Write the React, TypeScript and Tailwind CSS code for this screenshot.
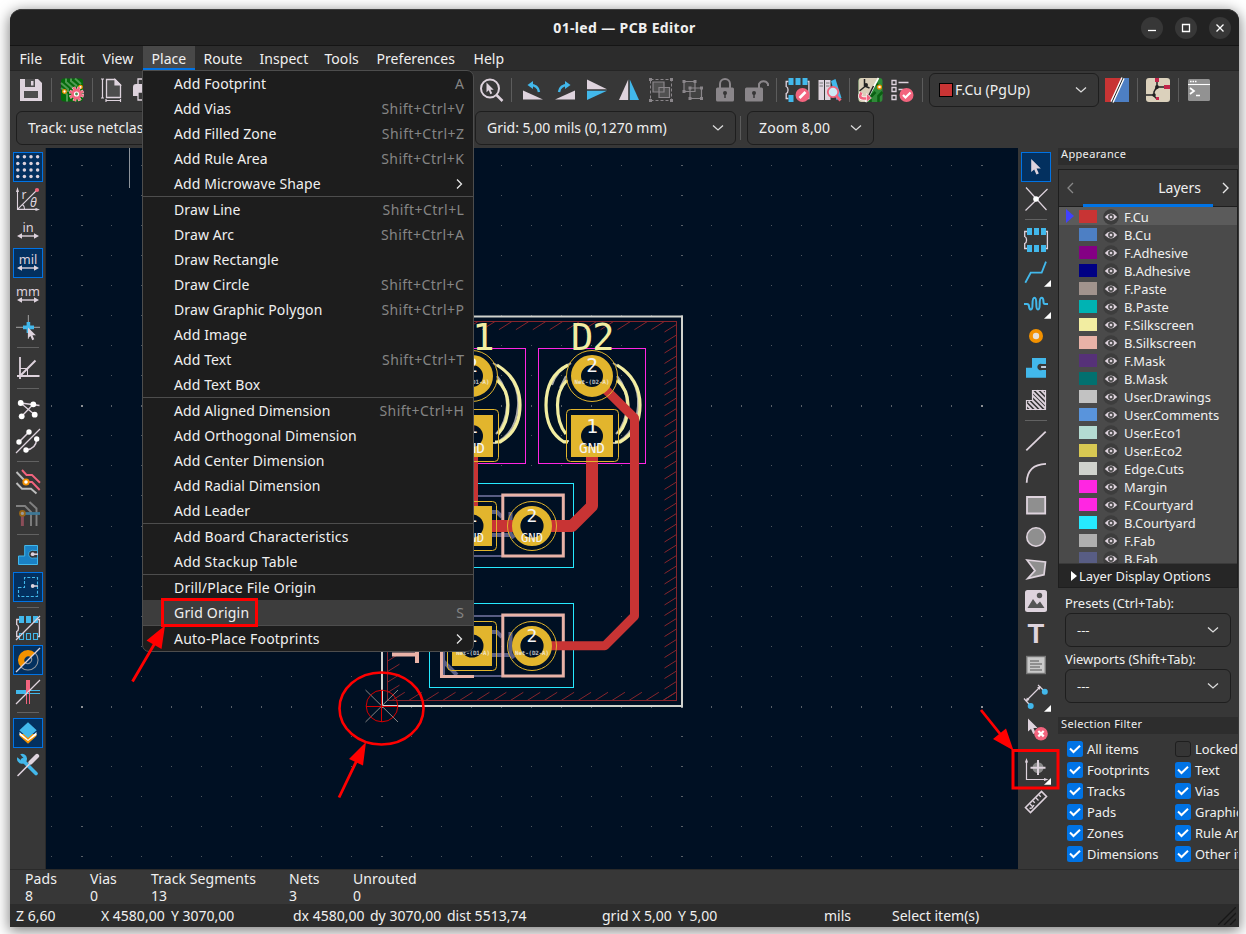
import React from "react";

type IconProps = { children: React.ReactNode };

const W = "#ded3dd";
const B = "#42b8eb";
const P = "#f2647e";
const O = "#f29100";

const Glyph = ({ children }: IconProps) => (
  <svg width="24" height="24" viewBox="0 0 24 24" fill="none" className="block shrink-0 overflow-visible">
    {children}
  </svg>
);

const Corner = () => <path d="M27 20V26.7H20Z" fill="#fff" />;
const Pointer = ({ x = 0, y = 0 }: { x?: number; y?: number }) => (
  <path
    transform={`translate(${x} ${y})`}
    d="M0 0V13L3 10.4L5.2 15.5L7.6 14.4L5.4 9.6H9.6Z"
    fill={W}
  />
);
const UnitArrow = () => (
  <>
    <path d="M4 17H20" stroke={W} strokeWidth="1.4" />
    <path d="M1 17L6 14.2V19.8ZM23 17L18 14.2V19.8Z" fill={W} />
  </>
);
const Unit = ({ t }: { t: string }) => (
  <Glyph>
    <text x="12" y="12.9" textAnchor="middle" fontSize="12.8" fill={W} fontFamily="Noto Sans, sans-serif">{t}</text>
    <UnitArrow />
  </Glyph>
);
const ChipOutline = () => (
  <path d="M3 3.5H.7V8.5C3.2 9.5 3.2 14.5.7 15.5V20.5H3M22 3.5H23.4V20.5H22" stroke={W} strokeWidth="1.3" />
);

const leftTools: (null | { on?: boolean; icon: React.ReactNode })[] = [
  {
    on: true,
    icon: (
      <Glyph>
        {[1.8, 8.4, 15, 21.6].map((y) => [1.8, 8.4, 15, 21.6].map((x) => <circle key={`${x}${y}`} cx={x} cy={y} r="1.75" fill={W} />))}
      </Glyph>
    ),
  },
  {
    icon: (
      <Glyph>
        <path d="M1.5 3V22.4H21M1.5 22.4L21 3M6.5 17.5Q9 19.5 8.5 22" stroke={W} strokeWidth="1.1" />
        <path d="M1.5 0L0 5H3ZM24 22.4L19.500 21V24Z" fill={W} />
        <circle cx="21" cy="3" r="2.1" fill={P} />
        <text x="5.500" y="11.500" fontSize="12" fill={W} fontFamily="Noto Sans, sans-serif">r</text>
        <text x="14" y="20" fontSize="12.500" fontStyle="italic" fill={W} fontFamily="Noto Sans, sans-serif">θ</text>
      </Glyph>
    ),
  },
  { icon: <Unit t="in" /> },
  { on: true, icon: <Unit t="mil" /> },
  { icon: <Unit t="mm" /> },
  {
    icon: (
      <Glyph>
        <path d="M12.400 0V24M0 12.400H24" stroke="#8f8f8f" strokeWidth="1.200" />
        <path d="M12.400 7V18M7 12.400H18" stroke={B} strokeWidth="3.600" />
        <g transform="translate(12 12.500) scale(.82)"><Pointer /></g>
      </Glyph>
    ),
  },
  null,
  {
    icon: (
      <Glyph>
        <path d="M4 1V23M1 20H23.500" stroke={W} strokeWidth="1.800" />
        <path d="M4 20L19.500 4.500" stroke={W} strokeWidth="2" />
        <path d="M4 12.500H11.500V20" stroke={W} strokeWidth="1" />
      </Glyph>
    ),
  },
  null,
  {
    icon: (
      <Glyph>
        <path d="M4.700 6L23.500 8.500M4.700 6L18.700 17.700M17.300 7.300L5.700 19.300" stroke={W} strokeWidth="1.300" />
        {[[4.7, 6], [17.3, 7.3], [18.7, 17.7], [5.7, 19.3]].map(([x, y]) => <circle key={x} cx={x} cy={y} r="2.900" fill="#fff" />)}
      </Glyph>
    ),
  },
  {
    icon: (
      <Glyph>
        <path d="M0 24L24 0" stroke={W} strokeWidth="1.200" />
        <path d="M13 3L3 13M20.700 10Q20 20 10 21" stroke={W} strokeWidth="1.500" />
        {[[13, 3], [3, 13], [20.7, 10], [10, 21]].map(([x, y]) => <circle key={x} cx={x} cy={y} r="2.700" fill="#fff" />)}
      </Glyph>
    ),
  },
  null,
  {
    icon: (
      <Glyph>
        <path d="M.500 2L10 12M.500 13L6 18.700H15L20.500 23.500" stroke="#bdbdbd" strokeWidth="1.900" />
        <path d="M6 0L10.500 5H16L24 12.700M10 12H16L23.700 20" stroke={P} strokeWidth="1.900" />
        <circle cx="10" cy="12" r="3.600" fill={O} />
        <circle cx="10" cy="12" r="1.800" fill="#fff" />
      </Glyph>
    ),
  },
  {
    icon: (
      <Glyph>
        <path d="M0 4H9L15 10V24M13.500 0L20.500 6.500V24" stroke="#808080" strokeWidth="1.900" />
        <path d="M7 11.500H24" stroke="#3e7896" strokeWidth="2.800" />
        <path d="M6.400 13V24" stroke="#8b4d58" strokeWidth="3" />
        <circle cx="6.400" cy="11.400" r="3.300" fill="#976515" />
        <circle cx="6.400" cy="11.400" r="1.600" fill="#999" />
      </Glyph>
    ),
  },
  null,
  {
    icon: (
      <Glyph>
        <path d="M2.500 13H8.700V2.500H21.500V21.500H2.500Z" fill="#1a81c4" stroke={B} />
        <path d="M21.500 7.500H18A4 4 0 1 0 18 15H21.500Z" fill="#383838" stroke={B} strokeWidth=".8" />
        <circle cx="16.700" cy="11.200" r="1.900" fill={W} />
        <path d="M16 11.200H22" stroke={W} strokeWidth="1.500" />
      </Glyph>
    ),
  },
  {
    on: true,
    icon: (
      <Glyph>
        <path d="M2.500 12.500H8.500V2.500H21.500V21.500H2.500Z" stroke={B} strokeWidth="1.100" strokeDasharray="3 1.700" />
        <circle cx="16.700" cy="11" r="1.900" fill={W} />
        <path d="M16 11H22" stroke={W} strokeWidth="1.500" />
      </Glyph>
    ),
  },
  null,
  {
    icon: (
      <Glyph>
        <ChipOutline />
        <path d="M3 0H8V7H3ZM10 0H15V7H10ZM17 0H22V7H17Z" fill={B} />
        <path d="M3.500 17.500H7.500V23.500H3.500ZM10.500 17.500H14.500V23.500H10.500ZM17.500 17.500H21.500V23.500H17.500Z" stroke={B} strokeWidth="1.100" />
        <path d="M0 24L24 0" stroke={W} strokeWidth="1.200" />
      </Glyph>
    ),
  },
  {
    on: true,
    icon: (
      <Glyph>
        <path d="M4.900 19.100A10 10 0 0 1 19.100 4.900L14.800 9.200A4 4 0 0 0 9.200 14.800Z" fill={O} />
        <path d="M19.100 4.900A10 10 0 0 1 4.900 19.100M14.800 9.200A4 4 0 0 1 9.200 14.800" stroke="#8f949b" strokeWidth="1.100" />
        <path d="M0 24L24 0" stroke={W} strokeWidth="1.200" />
      </Glyph>
    ),
  },
  {
    icon: (
      <Glyph>
        <path d="M0 12H12" stroke={B} strokeWidth="4" />
        <path d="M12 10.500H24M12 13.500H24" stroke={B} strokeWidth="1" />
        <path d="M12 0V12" stroke={P} strokeWidth="4" />
        <path d="M10.500 12V24M13.500 12V24" stroke={P} strokeWidth="1" />
        <path d="M0 24L24 0" stroke={W} strokeWidth="1.200" />
      </Glyph>
    ),
  },
  null,
  {
    on: true,
    icon: (
      <Glyph>
        <path d="M3.500 15L12 22.700L20.500 15V13H3.500Z" fill={O} />
        <path d="M3.500 11L12 18.700L20.500 11V14L12 20L3.500 14Z" fill="#fff" />
        <path d="M12 1.300L20.700 9.300L12 17L3.300 9.300Z" fill={B} />
      </Glyph>
    ),
  },
  {
    icon: (
      <Glyph>
        <path d="M6.500 7L20 20.500" stroke={B} strokeWidth="3.600" strokeLinecap="round" />
        <path d="M4.200 1.200A5 5 0 1 1 1.300 4.200L5 7.500L7.500 5Z" fill={B} />
        <path d="M2 22.500L13 11.500" stroke={W} strokeWidth="1.600" strokeLinecap="round" />
        <path d="M14.500 9.500L21 3" stroke={W} strokeWidth="4.300" strokeLinecap="round" />
      </Glyph>
    ),
  },
];

const rightTools: (null | { on?: boolean; icon: React.ReactNode })[] = [
  { on: true, icon: <Glyph><Pointer x={7.2} y={4} /></Glyph> },
  {
    icon: (
      <Glyph>
        <path d="M2 .500L22.500 23M23.500 2L1.500 23.500" stroke={W} strokeWidth="1.200" />
        <circle cx="12" cy="12" r="2.800" fill="#fff" />
      </Glyph>
    ),
  },
  null,
  {
    icon: (
      <Glyph>
        <ChipOutline />
        <path d="M3 0H8V7H3ZM10 0H15V7H10ZM17 0H22V7H17ZM3 17H8V24H3ZM10 17H15V24H10ZM17 17H22V24H17Z" fill={B} />
      </Glyph>
    ),
  },
  { icon: <Glyph><path d="M1.300 22.700L6.700 12.700H17.700L22 1.700" stroke={B} strokeWidth="1.800" /><Corner /></Glyph> },
  {
    icon: (
      <Glyph>
        <path d="M0 12H3Q5 12 5 14.500Q5.400 17.500 7 17.500Q8.500 17.500 8.500 12Q8.500 5.800 10.500 5.800Q12.300 5.800 12.300 12Q12.300 17.500 14 17.500Q15.700 17.500 15.700 12Q15.700 5.800 17.500 5.800Q19.500 5.800 19.500 10Q19.500 12 21 12H24" stroke={B} strokeWidth="2" />
        <Corner />
      </Glyph>
    ),
  },
  { icon: <Glyph><circle cx="12" cy="12" r="7" fill={O} /><circle cx="12" cy="12" r="3.200" fill="#e6e0d8" /></Glyph> },
  {
    icon: (
      <Glyph>
        <path d="M2 11.700H8V2H22V21.700H2Z" fill={B} />
        <path d="M22 8H18A3.300 3.300 0 1 0 18 14H22V12H18A1.200 1.200 0 0 1 18 10H22Z" fill="#383838" />
        <path d="M17 11H22" stroke={W} strokeWidth="1.600" />
      </Glyph>
    ),
  },
  {
    icon: (
      <Glyph>
        <path d="M2.500 12.500H8.500V2.500H21.500V21.500H2.500Z" stroke={W} strokeWidth="1.200" />
        <path d="M2.500 16.500L7.500 21.500M4.500 13.500L12.500 21.500M8.500 12.500L17.500 21.500M8.500 7.500L21.500 20.500M8.500 3.500L21.500 16.500M12.500 2.500L21.500 11.500M17.500 2.500L21.500 6.500" stroke={W} strokeWidth="1.800" />
      </Glyph>
    ),
  },
  null,
  { icon: <Glyph><path d="M2.300 21.300L21.700 2.700" stroke={W} strokeWidth="1.800" /></Glyph> },
  { icon: <Glyph><path d="M2.700 21.700Q3 3.500 22 2.800" stroke={W} strokeWidth="1.800" /></Glyph> },
  { icon: <Glyph><path d="M3 4H21.200V20.500H3Z" fill="#8f8f8f" stroke={W} strokeWidth="1.800" /></Glyph> },
  { icon: <Glyph><circle cx="12" cy="12" r="9.200" fill="#8f8f8f" stroke={W} strokeWidth="1.600" /></Glyph> },
  { icon: <Glyph><path d="M3 3L21.500 5L20 17.700L3.700 21.500L11 13.700Z" fill="#8f8f8f" stroke={W} strokeWidth="1.700" /></Glyph> },
  {
    icon: (
      <Glyph>
        <rect x="1" y="1" width="22" height="22" rx="2.500" fill={W} />
        <path d="M3.500 19L9 10L13 15.500L16 12.500L20.500 19Z" fill="#555" />
        <circle cx="15.500" cy="6.500" r="2.700" fill="#555" />
      </Glyph>
    ),
  },
  { icon: <Glyph><text x="12" y="21.700" textAnchor="middle" fontSize="27.500" fontWeight="700" fill={W} fontFamily="Liberation Sans, sans-serif">T</text></Glyph> },
  {
    icon: (
      <Glyph>
        <rect x="2.700" y="3.500" width="18.600" height="17" fill="#c9c9c9" stroke="#777" strokeWidth="1.400" />
        <path d="M6 8H15M6 11H18M6 14H16M6 17H18" stroke="#555" strokeWidth="1.100" />
      </Glyph>
    ),
  },
  {
    icon: (
      <Glyph>
        <path d="M2.500 15.500L16 2M0 13.500L6.700 21M14 0L21 6.700" stroke={W} strokeWidth="1.200" />
        <path d="M1.800 16.200L2.900 12.500L5.500 15.100ZM16.700 1.300L13 2.400L15.600 5Z" fill={W} />
        <circle cx="20.800" cy="6.800" r="3" fill={B} />
        <circle cx="6.700" cy="21" r="3" fill={B} />
        <Corner />
      </Glyph>
    ),
  },
  {
    icon: (
      <Glyph>
        <Pointer x={4} y={1.5} />
        <circle cx="17" cy="16.700" r="6.800" fill={P} />
        <path d="M14.300 14L19.700 19.400M19.700 14L14.300 19.400" stroke="#fff" strokeWidth="2.200" />
      </Glyph>
    ),
  },
  null,
  {
    icon: (
      <Glyph>
        <path d="M2.500 4V21.500H21" stroke={W} strokeWidth="1.200" />
        <path d="M2.500 0L.900 4.500H4.100ZM24.500 21.500L20 19.900V23Z" fill={W} />
        <circle cx="14" cy="9.700" r="5.500" fill="#8a8a8a" />
        <path d="M14 2V17M6.500 9.700H21.500" stroke={W} strokeWidth="2" />
        <Corner />
      </Glyph>
    ),
  },
  {
    icon: (
      <Glyph>
        <path d="M1.500 17.500L17.500 1.500L22.500 6.500L6.500 22.500Z" stroke={W} strokeWidth="1.600" />
        <path d="M6 14L8.500 16.500M9 11L10.800 12.800M12 8L14.500 10.500M15 5L16.800 6.800M5.500 18.500L8 18L10 15" stroke={W} strokeWidth="1.300" />
      </Glyph>
    ),
  },
];

const ToolColumn = ({ tools, label }: { tools: typeof leftTools; label: string }) => (
  <nav aria-label={label} className="flex flex-col items-center pt-[3px]">
    {tools.map((t, i) =>
      t === null ? (
        <div key={i} className="flex h-[9px] items-center"><div className="h-px w-[22px] bg-[#626262]" /></div>
      ) : (
        <div key={i} className="flex h-8 items-center">
          <div className={t.on ? "flex h-[30px] w-[30px] items-center justify-center border border-[#0073e5] bg-[#03305f]" : "flex h-[30px] w-[30px] items-center justify-center"}>
            {t.icon}
          </div>
        </div>
      )
    )}
  </nav>
);

const VSep = () => (
  <div className="flex w-[9px] shrink-0 justify-center"><div className="h-6 w-px bg-[#5c5c5c]" /></div>
);
const Cell = ({ children }: IconProps) => <div className="flex w-8 shrink-0 justify-center"><Glyph>{children}</Glyph></div>;

const Chevron = () => (
  <svg width="12" height="8" viewBox="0 0 12 8" fill="none" className="shrink-0"><path d="M1 1.500L6 6L11 1.500" stroke="#dcdcdc" strokeWidth="1.300" /></svg>
);

const Combo = ({ children, className }: { children: React.ReactNode; className: string }) => (
  <div className={`flex h-[34px] shrink-0 items-center justify-between rounded-[6px] border border-[#1e1e1e] bg-[#373737] pr-[11px] pl-[11px] ${className}`}>
    <span className="flex items-center whitespace-nowrap">{children}</span>
    <Chevron />
  </div>
);

const Pcb = () => {
  const dots: React.ReactNode[] = [];
  for (let i = 0; i <= 31; i++) {
    for (let j = 0; j <= 23; j++) {
      const mx = i % 10 === 1, my = j % 10 === 8;
      dots.push(
        <rect key={`${i}-${j}`} x={51 + i * 30} y={165 + j * 30 + (j > 11 ? 1 : 0)} width={mx ? 2 : 1} height={my ? 2 : 1} fill={mx && my ? "#8f9296" : mx || my ? "#596069" : "#4d555e"} />
      );
    }
  }
  const hatch: string[] = [];
  const x0 = 387.5, x1 = 676.5, y0 = 321.5, y1 = 700.5, s = 0.62;
  for (let k = -40; k < 60; k++) {
    const c = 743.9 + k * 10.5;
    const yr = c - s * x1, yl = c - s * x0, xt = (c - y0) / s, xb = (c - y1) / s;
    if (yr > y0 && yr < y1 - 4) hatch.push(`M${x1} ${yr}l-12 7.5`);
    if (yl > y0 + 4 && yl < y1) hatch.push(`M${x0} ${yl}l12 -7.5`);
    if (xt > x0 && xt < x1) hatch.push(`M${xt} ${y0}l-13 8.2`);
    if (xb > x0 && xb < x1) hatch.push(`M${xb} ${y1}l13 -8.2`);
  }
  const gold = "#e2b52d", bg = "#001023", mono = "DejaVu Sans Mono, monospace";
  const led = (dx: number, name: string) => (
    <g transform={`translate(${dx} 0)`}>
      <path d="M613 363Q640 378 638 406Q636 434 615 443H610M571 363Q556 371 552 385M569 441H562M566 376L560 388M617 376Q627 388 627 405Q626 424 616 434" stroke="#a9a9a9" strokeWidth="2" />
      <path d="M568 365Q546 376 546 405Q546 431 564 442H568M567 380Q557.500 390 557.500 405Q557.500 424 566 434" stroke="#f2eda1" strokeWidth="3.200" />
      <path d="M617 365Q640 379 640 405Q640 431 620 442H615M617 380Q628 390 628 405Q628 424 618 434" stroke="#f2eda1" strokeWidth="3.200" />
      <rect x="538.500" y="348.500" width="107" height="115" stroke="#ff26e2" />
      <text x="571" y="349.500" fontSize="37" fill="#f2eda1" fontFamily={mono} textLength="43.500">{name}</text>
    </g>
  );
  const ledPads = (dx: number, net: string) => (
    <g transform={`translate(${dx} 0)`}>
      <circle cx="592" cy="376" r="25.500" stroke={gold} />
      <circle cx="592" cy="376" r="16" stroke={gold} strokeWidth="10" fill={bg} />
      <rect x="566.500" y="409.500" width="52" height="52" rx="4" stroke={gold} />
      <rect x="571" y="415" width="42" height="42" fill={gold} />
      <circle cx="592" cy="436" r="11" fill={bg} />
      <g fill="#f4f4f4" fontFamily={mono} textAnchor="middle">
        <text x="592" y="372" fontSize="19.500">2</text>
        <text x="592" y="432.500" fontSize="19.500">1</text>
        <text x="592" y="453" fontSize="14.500" textLength="26" lengthAdjust="spacingAndGlyphs">GND</text>
        <text x="592" y="384" fontSize="5.800" fontWeight="700" textLength="35" opacity=".75">{net}</text>
      </g>
    </g>
  );
  const resistor = (dy: number) => (
    <g transform={`translate(0 ${dy})`}>
      <rect x="429.500" y="603.500" width="144" height="84" stroke="#26e9ff" />
      <rect x="444" y="616" width="119" height="60" stroke="#585d84" strokeWidth="2" />
      <path d="M443 661L457 675M492 632H497L502 637M492 655H512M510.500 632V654L514 658" stroke="#585d84" strokeWidth="4" />
      <rect x="502.800" y="615" width="60.500" height="61" stroke="#e8b2a7" strokeWidth="3" />
      <path d="M474 676.500H441.500V640" stroke="#e8b2a7" strokeWidth="3" />
    </g>
  );
  const resPads = (dy: number, gnd: boolean) => (
    <g transform={`translate(0 ${dy})`}>
      <rect x="447.500" y="621.500" width="49" height="49" rx="4" stroke={gold} />
      <rect x="452" y="626" width="40" height="40" fill={gold} />
      <circle cx="472" cy="646" r="11.500" fill={bg} />
      <circle cx="532" cy="646" r="24.500" stroke={gold} />
      <circle cx="532" cy="646" r="15.800" stroke={gold} strokeWidth="8.400" fill={bg} />
      <g fill="#f4f4f4" fontFamily={mono} textAnchor="middle">
        <text x="472" y="642" fontSize="18">1</text>
        <text x="532" y="642" fontSize="18">2</text>
        {gnd ? (
          <>
            <text x="473" y="662" fontSize="13" textLength="22" lengthAdjust="spacingAndGlyphs">GND</text>
            <text x="532" y="662" fontSize="13" textLength="22" lengthAdjust="spacingAndGlyphs">GND</text>
          </>
        ) : (
          <>
            <text x="473" y="654.500" fontSize="5.800" fontWeight="700" textLength="34" opacity=".75">Net-(D1-A)</text>
            <text x="532" y="654.500" fontSize="5.800" fontWeight="700" textLength="34" opacity=".75">Net-(D2-A)</text>
          </>
        )}
      </g>
    </g>
  );
  return (
    <svg width="972" height="721" viewBox="46 148 972 721" fill="none" className="block shrink-0">
      <rect x="46" y="148" width="972" height="721" fill={bg} />
      {dots}
      <path d="M129.500 148V188" stroke="#8d949b" />
      <path d="M382 316.500H682V706H382Z" stroke="#d0d2cd" strokeWidth="2" />
      <rect x={x0} y={y0} width={x1 - x0} height={y1 - y0} stroke="#86252c" />
      <path d={hatch.join("")} stroke="#86252c" />
      {led(-120, "D1")}
      {led(0, "D2")}
      {resistor(-120)}
      {resistor(0)}
      <path d="M392 654.500H418M417 652V663" stroke="#e8b2a7" strokeWidth="4" />
      <g stroke="#c83434" strokeLinejoin="round">
        <path d="M592 376L634.500 418V616L605 645.700H532" strokeWidth="9" />
        <path d="M592 436V506L572 526H472V436" strokeWidth="12" />
      </g>
      {ledPads(-120, "Net-(D1-A)")}
      {ledPads(0, "Net-(D2-A)")}
      {resPads(-120, true)}
      {resPads(0, false)}
      <path d="M365.500 690L398 722M398 690L365.500 722" stroke="#858585" />
      <circle cx="382" cy="706" r="15.800" stroke="#d40000" />
      <path d="M366 706.500H398M381.500 690V722" stroke="#d40000" />
    </svg>
  );
};

const menu: [string, string][][] = [
  [["Add Footprint", "A"], ["Add Vias", "Shift+Ctrl+V"], ["Add Filled Zone", "Shift+Ctrl+Z"], ["Add Rule Area", "Shift+Ctrl+K"], ["Add Microwave Shape", ">"]],
  [["Draw Line", "Shift+Ctrl+L"], ["Draw Arc", "Shift+Ctrl+A"], ["Draw Rectangle", ""], ["Draw Circle", "Shift+Ctrl+C"], ["Draw Graphic Polygon", "Shift+Ctrl+P"], ["Add Image", ""], ["Add Text", "Shift+Ctrl+T"], ["Add Text Box", ""]],
  [["Add Aligned Dimension", "Shift+Ctrl+H"], ["Add Orthogonal Dimension", ""], ["Add Center Dimension", ""], ["Add Radial Dimension", ""], ["Add Leader", ""]],
  [["Add Board Characteristics", ""], ["Add Stackup Table", ""]],
  [["Drill/Place File Origin", ""], ["Grid Origin", "S"]],
  [["Auto-Place Footprints", ">"]],
];

const PlaceMenu = () => (
  <div className="absolute top-[61px] left-[132px] w-[332px] overflow-hidden rounded-[7px] rounded-tl-none border border-[#4d4d4d] bg-[#1d1d1d]">
    {menu.map((group, g) => (
      <div key={g} className={g > 0 ? "border-t border-[#4d4d4d]" : ""}>
        {group.map(([name, key]) => (
          <div key={name} className={`flex h-[25px] items-center justify-between pr-[9px] pl-[31px] ${name === "Grid Origin" ? "bg-[#3d3d3d]" : ""}`}>
            <span className={g > 2 ? "tracking-[.2px]" : "tracking-[.1px]"}>{name}</span>
            {key === ">" ? (
              <svg width="8" height="12" viewBox="0 0 8 12" fill="none"><path d="M1 1.500L5.500 6L1 10.500" stroke="#e6e6e6" strokeWidth="1.300" /></svg>
            ) : (
              <span className="mr-[-.4px] tracking-[.45px] text-[#858585]">{key}</span>
            )}
          </div>
        ))}
      </div>
    ))}
  </div>
);

const menubar: [string, string][] = [
  ["File", "w-[40px]"], ["Edit", "w-[43px]"], ["View", "w-[49px]"], ["Place", "w-[52px]"], ["Route", "w-[56px]"],
  ["Inspect", "w-[65px]"], ["Tools", "w-[52px]"], ["Preferences", "w-[97px]"], ["Help", "w-[47px]"],
];

const layers: [string, string][] = [
  ["F.Cu", "#c83434"], ["B.Cu", "#4d7fc4"], ["F.Adhesive", "#840084"], ["B.Adhesive", "#000084"], ["F.Paste", "#a1938d"],
  ["B.Paste", "#00b3b3"], ["F.Silkscreen", "#f2eda1"], ["B.Silkscreen", "#e8b2a7"], ["F.Mask", "#563178"], ["B.Mask", "#02706f"],
  ["User.Drawings", "#c2c2c2"], ["User.Comments", "#5994dc"], ["User.Eco1", "#b4dbd2"], ["User.Eco2", "#d8c852"], ["Edge.Cuts", "#d0d2cd"],
  ["Margin", "#ff26e2"], ["F.Courtyard", "#ff26e2"], ["B.Courtyard", "#26e9ff"], ["F.Fab", "#afafaf"], ["B.Fab", "#585d84"],
];

const Eye = () => (
  <svg width="16" height="16" viewBox="0 0 16 16" className="shrink-0">
    <circle cx="8" cy="8" r="7.800" fill="#3d3d3d" />
    <path d="M1.800 8Q8 1.200 14.200 8Q8 14.800 1.800 8Z" fill={W} />
    <circle cx="8" cy="8" r="2.900" fill="#4b4b4b" />
    <circle cx="8" cy="8" r="1.300" fill={W} />
  </svg>
);

const Check = ({ label, off }: { label: string; off?: boolean }) => (
  <div className="flex h-[21px] items-center gap-1 whitespace-nowrap">
    {off ? (
      <span className="h-4 w-4 shrink-0 rounded-[3px] border border-[#1e1e1e] bg-[#353535]" />
    ) : (
      <svg width="16" height="16" viewBox="0 0 16 16" fill="none" className="shrink-0">
        <rect width="16" height="16" rx="2.500" fill="#0073e5" />
        <path d="M3 7.500L6.500 11L13 4.800" stroke="#fff" strokeWidth="2" />
      </svg>
    )}
    {label}
  </div>
);

const Appearance = () => (
  <aside className="w-[180px] shrink-0 overflow-hidden text-[12.9px]">
    <h2 className="h-[17px] bg-[#2d2d2d] pl-[3px] text-[11px] leading-[12px] tracking-[.35px]">Appearance</h2>
    <section className="mt-[4px] flex h-[419px] w-[180px] flex-col border border-[#1e1e1e]">
      <div className="flex h-[37px] shrink-0 items-center border-b border-[#1e1e1e]">
        <svg width="24" height="16" viewBox="0 0 24 16" fill="none"><path d="M14 3L9 8L14 13" stroke="#888" strokeWidth="1.300" /></svg>
        <div className="flex h-[37px] w-[130px] items-center justify-end border-b-[3px] border-[#0073e5] pt-[2px] pr-[12px] text-[14px]">Layers</div>
        <svg width="24" height="16" viewBox="0 0 24 16" fill="none"><path d="M10 3L15 8L10 13" stroke="#e8e8e8" strokeWidth="1.400" /></svg>
      </div>
      <div className="min-h-0 flex-1 overflow-hidden bg-[#4a4a4a]">
        {layers.map(([name, color], i) => (
          <div key={name} className={`flex h-[18px] items-center ${i === 0 ? "bg-[#5b5b5b]" : ""}`}>
            <span className="flex w-5 shrink-0 justify-end pr-[5px]">
              {i === 0 && <svg width="8" height="14" viewBox="0 0 8 14"><path d="M0 0L8 7L0 14Z" fill="#4141ff" /></svg>}
            </span>
            <span className="h-[13px] w-[18px] shrink-0" style={{ background: color }} />
            <span className="mr-[5px] ml-[6px] flex pt-px"><Eye /></span>
            <span className="pt-[2px] leading-4">{name}</span>
          </div>
        ))}
      </div>
      <div className="flex h-[24px] shrink-0 items-center gap-[2px] border-t border-[#3a3a3a] bg-[#262626] pl-[12px]">
        <svg width="6" height="10" viewBox="0 0 6 10"><path d="M0 0L6 5L0 10Z" fill="#fff" /></svg>
        Layer Display Options
      </div>
    </section>
    <div className="pl-[7px]">
      <p className="flex h-[25px] items-center pt-[5px]">Presets (Ctrl+Tab):</p>
      <Combo className="w-[166px]">---</Combo>
      <p className="flex h-[22px] items-center pt-[2px]">Viewports (Shift+Tab):</p>
      <Combo className="w-[166px]">---</Combo>
    </div>
    <h2 className="mt-[14px] h-[17px] bg-[#2d2d2d] pl-[3px] text-[11px] leading-[14px] tracking-[.35px]">Selection Filter</h2>
    <div className="mt-[4px] grid w-[250px] grid-cols-[108px_140px] pl-[9px]">
      <Check label="All items" /><Check label="Locked items" off />
      <Check label="Footprints" /><Check label="Text" />
      <Check label="Tracks" /><Check label="Vias" />
      <Check label="Pads" /><Check label="Graphics" />
      <Check label="Zones" /><Check label="Rule Areas" />
      <Check label="Dimensions" /><Check label="Other items" />
    </div>
  </aside>
);

const board = (
  <>
    <rect width="24" height="24" rx="3" fill="#127a1b" />
    <path d="M9 0V4L16 10V24M15 0V4L20 9H24M0 10H5L9 14V24M4 0V6" stroke="#5fae62" strokeWidth="2" />
  </>
);

const Toolbars = () => (
  <div className="h-[77px] bg-[#373737]">
    <div className="flex h-[38px] items-center">
      <div className="flex w-[465px] shrink-0 items-center overflow-hidden pl-[5px]">
        <Cell>
          <path d="M1 1H19L23 5V23H1Z" fill={W} />
          <path d="M6 1H16V9H6ZM5 13H19V20H5Z" fill="#4d4d4d" />
          <path d="M12 3H14.500V7.500H12Z" fill={W} />
        </Cell>
        <VSep />
        <Cell>
          <g transform="translate(1 0)">
            <rect width="22" height="23" y=".500" rx="3" fill="#056b0c" />
            <path d="M5 .500V4L13 11V13M10 .500V3L16 8M14 .500L20 6M0 10L4 13L6 17V23.500M0 5L7 11V14" stroke="#4f9b53" strokeWidth="2" />
            <circle cx="3.500" cy="13.500" r="1.800" fill="#fff" stroke={O} strokeWidth="1.300" />
            <circle cx="19.500" cy="9" r="1.700" fill="#fff" stroke={O} strokeWidth="1.300" />
            <circle cx="15.500" cy="16" r="6.300" stroke="#ffd9df" strokeDasharray="3.300 1.648" strokeWidth="2.400" />
            <circle cx="15.500" cy="16" r="6.300" stroke={P} strokeDasharray="2.300 2.648" strokeDashoffset="-.500" strokeWidth="2" />
            <circle cx="15.500" cy="16" r="5.400" fill={P} />
            <circle cx="15.500" cy="16" r="2" fill="#4b8f50" stroke="#fff" strokeWidth="1.200" />
          </g>
        </Cell>
        <VSep />
        <Cell>
          <path d="M5.500 1.500H14L19.500 7V19.500H5.500Z" fill="#4d4d4d" stroke={W} strokeWidth="1.300" />
          <path d="M14 1.500V7H19.500ZM1.500 1V20M0 1H3M0 20H3M5 22.500H19M5 21V24M19.500 21V24" stroke={W} strokeWidth="1.200" fill={W} />
        </Cell>
        <Cell>
          <path d="M5 7V1H17V7" stroke={W} strokeWidth="1.300" />
          <path d="M0 9Q0 6 3 6H21Q24 6 24 9V18H19V14H5V18H0Z" fill={W} />
          <path d="M5 14H19V22H5Z" stroke={W} strokeWidth="1.300" />
        </Cell>
      </div>
      <Cell>
        <circle cx="11" cy="10.500" r="9" stroke={W} strokeWidth="2" />
        <path d="M17.500 17L23.500 23" stroke={W} strokeWidth="2.500" />
        <g transform="translate(7.500 4.500) scale(.75)"><Pointer /></g>
      </Cell>
      <VSep />
      <Cell><path d="M3 12.500L23 21.500H3Z" fill={W} /><path d="M19 14Q18 7 10 7" stroke={B} strokeWidth="2.400" /><path d="M7.500 7L13 3V11Z" fill={B} /></Cell>
      <Cell><path d="M23 12.500L3 21.500H23Z" fill={W} /><path d="M7 14Q8 7 16 7" stroke={B} strokeWidth="2.400" /><path d="M18.500 7L13 3V11Z" fill={B} /></Cell>
      <Cell><path d="M3 1.500L23 11.200H3Z" fill={W} /><path d="M3 12.800H23L3 22Z" fill={B} /></Cell>
      <Cell><path d="M12.200 1.500V22H3Z" fill={W} /><path d="M13.800 1.500V22H23Z" fill={B} /></Cell>
      <Cell>
        <g transform="translate(1 0)">
          <path d="M1.500 1.500H22.500V22.500H1.500Z" stroke="#8a868a" strokeDasharray="3 2" />
          <path d="M0 0H3V3H0ZM21 0H24V3H21ZM0 21H3V24H0ZM21 21H24V24H21Z" fill="#8a868a" />
          <path d="M4 4H15V14H4ZM10 9.500H20.500V19.500H10Z" fill="#505050" stroke="#8a868a" strokeWidth="1.200" />
        </g>
      </Cell>
      <Cell>
        <g transform="translate(1.500 0)">
          <path d="M2.500 3.500H13.500V13.500H2.500ZM8.500 10H20V20.500H8.500Z" fill="#424242" stroke="#8a868a" strokeWidth="1.200" />
          <path d="M1 2H4V5H1ZM12 2H15V5H12ZM1 12H4V15H1ZM7 8.500H10V11.500H7ZM18.500 8.500H21.500V11.500H18.500ZM7 19H10V22H7ZM18.500 19H21.500V22H18.500Z" fill="#8a868a" />
        </g>
      </Cell>
      <Cell>
        <g transform="translate(1 0)">
          <path d="M7 10V6A5 5 0 0 1 17 6V10" stroke="#8a868a" strokeWidth="2" />
          <rect x="3" y="9.500" width="18" height="14" rx="1.500" fill="#8a868a" />
          <circle cx="12" cy="15" r="2" fill="#373737" /><path d="M12 15V20" stroke="#373737" strokeWidth="1.500" />
        </g>
      </Cell>
      <Cell>
        <g transform="translate(1 0)">
          <path d="M14 10V6A5 5 0 0 1 23 6V8" stroke="#8a868a" strokeWidth="2" />
          <rect x="0" y="9.500" width="18" height="14" rx="1.500" fill="#8a868a" />
          <circle cx="9" cy="15" r="2" fill="#373737" /><path d="M9 15V20" stroke="#373737" strokeWidth="1.500" />
        </g>
      </Cell>
      <VSep />
      <Cell>
        <g transform="translate(.500 0)">
          <ChipOutline />
          <path d="M3 0H8V7H3ZM10 0H15V7H10ZM17 0H22V7H17ZM3 17H8V24H3Z" fill={B} />
          <circle cx="17" cy="17" r="7" fill={P} /><path d="M14 20L20 14" stroke="#fff" strokeWidth="2.600" />
        </g>
      </Cell>
      <Cell>
        <g transform="translate(.500 0)">
          <path d="M1 2H6.500V22H1ZM7.500 2H13V22H7.500Z" fill={W} />
          <path d="M2 5H5.500M2 8H5.500M8.500 5H12M8.500 8H12" stroke="#777" />
          <path d="M13.500 3L18 1L24 20L19 22Z" fill={B} />
          <path d="M19 18L23 22.500" stroke={P} strokeWidth="2.800" />
          <circle cx="15.500" cy="14" r="5.200" fill="#cdeaf5" stroke={P} strokeWidth="1.800" />
        </g>
      </Cell>
      <VSep />
      <Cell>
        <g transform="translate(.500 0)">
          <rect width="24" height="24" rx="3" fill="#2f8a38" />
          <path d="M24 9H21L17 5M12 24V19L17 14M24 14L20 18V24" stroke="#0a5f12" strokeWidth="2.600" />
          <path d="M3 0H20L7 24H3Q0 24 0 21V3Q0 0 3 0Z" fill="#d9ceb8" />
          <path d="M20 0L7 24" stroke="#fff" strokeWidth="1.600" />
          <path d="M6 1V8L11 10M7 8L1 13M15 8L10 18" stroke="#222" strokeWidth="1.500" />
          <circle cx="7.500" cy="7" r="2" fill="#222" />
          <circle cx="21" cy="9" r="1.900" fill="#fff" stroke={O} strokeWidth="1.300" />
          <path d="M3 14.500Q-.500 20 5 20.500H9" stroke="#fff" strokeWidth="4" />
          <path d="M3 14.500Q-.500 20 5 20.500H9" stroke={P} strokeWidth="2.600" />
          <path d="M8 15.500L13 20L8 24Z" fill={P} stroke="#fff" strokeWidth=".600" />
        </g>
      </Cell>
      <Cell>
        <g transform="translate(.500 0)">
          <path d="M1.500 2.500H5.500V6.500H1.500ZM1.500 9.500H5.500V13.500H1.500ZM1.500 17.500H5.500V21.500H1.500ZM8 4.500H18M8 11.500H13" stroke={W} strokeWidth="1.300" />
          <circle cx="16" cy="17" r="7" fill={P} /><path d="M12.500 17L15 19.500L20 14.500" stroke="#fff" strokeWidth="2.200" />
        </g>
      </Cell>
      <VSep />
      <Combo className="ml-[2px] w-[170px]">
        <span className="mr-[2px] ml-[-2px] h-[14px] w-[14px] border border-black bg-[#c83434]" />F.Cu (PgUp)
      </Combo>
      <span className="w-[2px] shrink-0" />
      <Cell>
        <path d="M0 0H24V24H0Z" fill="#4d7fc4" /><path d="M0 0H17L6 24H0Z" fill="#c83434" />
        <path d="M18 0L7 24" stroke="#fff" strokeWidth="3.600" /><path d="M18 0L7 24" stroke="#222" strokeWidth="1" />
      </Cell>
      <VSep />
      <Cell>
        <rect width="24" height="24" rx="3" fill="#dbd1bc" />
        <path d="M11 2V8L8 14V18L11 21M9 12L12 9H20M0 17H8" stroke="#222" strokeWidth="1.500" />
        <path d="M9 0H13V4H9ZM18 7H24V11H18ZM10 19H13V22H10Z" fill="#c2254a" />
        <circle cx="11" cy="9" r="1.900" fill="#222" /><circle cx="8" cy="17" r="1.800" fill="#222" />
      </Cell>
      <VSep />
      <Cell>
        <rect x="1" y="1" width="22" height="22" rx="1.500" fill="#929292" />
        <path d="M1 6.500H23" stroke="#fff" strokeWidth="1.100" />
        <path d="M3 3.500H9.500" stroke="#fff" strokeWidth="1.600" strokeDasharray="1.600 .9" />
        <path d="M3 10L7 13L3 16M9 17.500H13" stroke="#fff" strokeWidth="1.700" />
      </Cell>
    </div>
    <div className="flex h-[38px] items-center">
      <Combo className="ml-[6px] w-[440px]">Track: use netclass width</Combo>
      <Combo className="ml-[19px] w-[261px]">Grid: 5,00 mils (0,1270 mm)</Combo>
      <VSep />
      <Combo className="ml-[2px] w-[127px] tracking-[.2px]">Zoom 8,00</Combo>
    </div>
  </div>
);

const stats: [string, string, string][] = [
  ["Pads", "8", "w-[65px]"], ["Vias", "0", "w-[61px]"], ["Track Segments", "13", "w-[138px]"], ["Nets", "3", "w-[64px]"], ["Unrouted", "0", "w-[80px]"],
];
const status: [string, string][] = [
  ["Z 6,60", "w-[85px]"], ["X 4580,00", "w-[70px]"], ["Y 3070,00", "w-[122px]"], ["dx 4580,00", "w-[77px]"], ["dy 3070,00", "w-[77px]"],
  ["dist 5513,74", "w-[155px]"], ["grid X 5,00", "w-[76px]"], ["Y 5,00", "w-[146px]"], ["mils", "w-[68px]"], ["Select item(s)", "w-[200px]"],
];

const Marks = () => (
  <svg width="1246" height="934" viewBox="0 0 1246 934" fill="none" className="pointer-events-none absolute top-0 left-0">
    <g stroke="#f00" strokeWidth="3">
      <rect x="162.500" y="599.500" width="94" height="26" />
      <rect x="1013" y="750.500" width="45" height="37.500" />
      <ellipse cx="381.500" cy="708.500" rx="42" ry="36" strokeWidth="2.600" />
      <path d="M132.500 681.500L155 643M339 797.500L357 760M981 710L1001 735" strokeWidth="2.800" />
    </g>
    <path d="M165 625.500L146.500 640.500L161.500 649ZM366 742L349 759L363 765.500ZM1013.500 750.500L1006 728.500L993 739Z" fill="#f00" />
  </svg>
);

export default function App() {
  return (
    <div className="relative h-[934px] w-[1246px] overflow-hidden bg-white pt-[9px] pl-[10px] font-['Noto_Sans',sans-serif] text-[14px] leading-[18px] text-[#f0f0f0]">
      <main className="relative flex h-[918px] w-[1229px] flex-col overflow-visible rounded-t-[12px] bg-[#373737] shadow-[0_3px_14px_1px_rgba(0,0,0,.5)]">
        <header className="relative flex h-[37px] shrink-0 items-center justify-center rounded-t-[12px] border-t border-b border-t-[#3e3e3e] border-b-[#151515] bg-[#222]">
          <h1 className="text-[14px] font-bold tracking-[.35px]">01-led — PCB Editor</h1>
          <div className="absolute right-[8px] flex gap-3">
            {["M7 13.500H15", "M7.500 7.500H14.500V14.500H7.500Z", "M7.500 7.500L14.500 14.500M14.500 7.500L7.500 14.500"].map((d) => (
              <svg key={d} width="22" height="22" viewBox="0 0 22 22" fill="none"><circle cx="11" cy="11" r="11" fill="#373737" /><path d={d} stroke="#fff" strokeWidth="1.300" /></svg>
            ))}
          </div>
        </header>
        <div className="flex h-[25px] shrink-0 border-b border-[#252525] bg-[#2c2c2c] pl-[1px]">
          {menubar.map(([name, w]) => (
            <div key={name} className={`flex items-center pl-[8.5px] tracking-[.05px] ${w} ${name === "Place" ? "border-b-2 border-[#0073e5] bg-[#484848] pt-[4px]" : "pt-[2px]"}`}>{name}</div>
          ))}
        </div>
        <Toolbars />
        <div className="flex h-[721px] shrink-0">
          <div className="w-[36px] shrink-0 border-r border-[#2a2a2a]"><ToolColumn tools={leftTools} label="Display options" /></div>
          <Pcb />
          <div className="flex w-[40px] shrink-0 flex-col pr-[4px]"><ToolColumn tools={rightTools} label="Drawing tools" /></div>
          <Appearance />
        </div>
        <div className="flex h-[35px] shrink-0 border-t border-[#2a2a2a] pl-[15px] leading-[17px] tracking-[.08px]">
          {stats.map(([name, value, w]) => (
            <dl key={name} className={`whitespace-nowrap ${w}`}><dt>{name}</dt><dd>{value}</dd></dl>
          ))}
        </div>
        <footer className="flex h-[23px] shrink-0 items-center bg-[#2c2c2c] pl-[6px] text-[14px] whitespace-nowrap">
          {status.map(([s, w]) => <span key={s} className={`shrink-0 ${w}`}>{s}</span>)}
          <svg width="18" height="18" viewBox="0 0 18 18" className="ml-auto mr-[3px] shrink-0"><path d="M0 18L18 0M6 18L18 6M12 18L18 12" stroke="#171717" strokeWidth="1.300" /></svg>
        </footer>
        <PlaceMenu />
      </main>
      <Marks />
    </div>
  );
}
